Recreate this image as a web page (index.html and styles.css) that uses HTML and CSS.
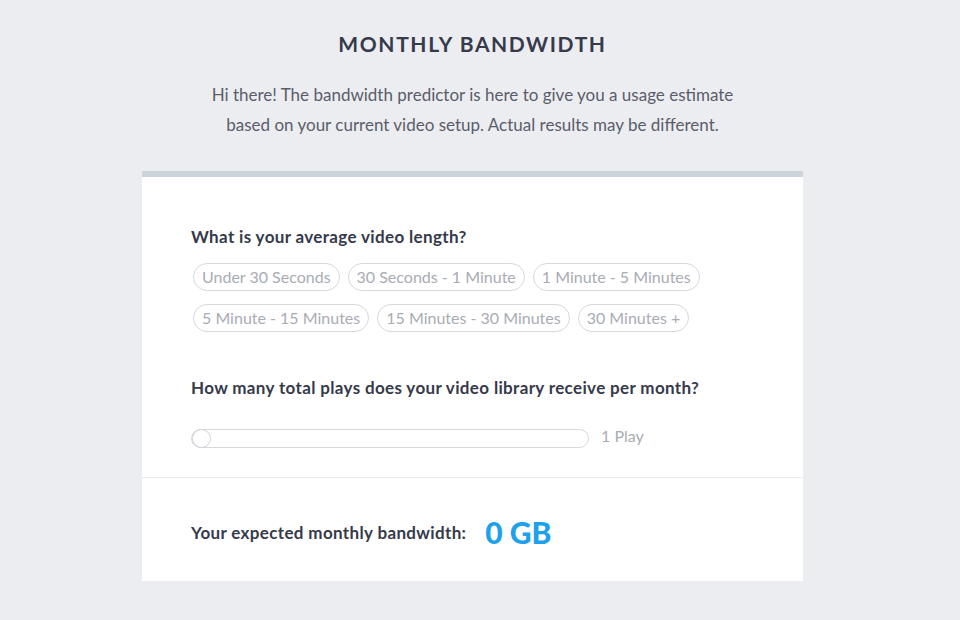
FILE: index.html
```html
<!DOCTYPE html>
<html>
<head>
<meta charset="utf-8">
<link rel="stylesheet" href="styles.css">
</head>
<body>
<div class="page">
  <h1 class="title">MONTHLY BANDWIDTH</h1>
  <p class="intro">Hi there! The bandwidth predictor is here to give you a usage estimate<br>based on your current video setup. Actual results may be different.</p>
  <div class="card">
    <div class="card-body">
      <h2 class="question">What is your average video length?</h2>
      <div class="pills">
        <span class="pill">Under 30 Seconds</span>
        <span class="pill">30 Seconds - 1 Minute</span>
        <span class="pill">1 Minute - 5 Minutes</span>
        <span class="pill">5 Minute - 15 Minutes</span>
        <span class="pill">15 Minutes - 30 Minutes</span>
        <span class="pill">30 Minutes +</span>
      </div>
      <h2 class="question q2">How many total plays does your video library receive per month?</h2>
      <div class="slider-row">
        <div class="track"><span class="thumb"></span></div>
        <span class="plays">1 Play</span>
      </div>
    </div>
    <div class="card-foot">
      <span class="result-label">Your expected monthly bandwidth:</span>
      <span class="result-value">0 GB</span>
    </div>
  </div>
</div>
</body>
</html>
```
FILE: styles.css
```css
html, body {
  margin: 0;
  padding: 0;
  background: #ecedf1;
}
body {
  font-family: Lato, "Open Sans", sans-serif;
  color: #3a3d4b;
}
.page {
  width: 945px;
  display: flex;
  flex-direction: column;
  align-items: center;
  padding-top: 30px;
}
.title {
  margin: 0;
  font-size: 21px;
  font-weight: 700;
  letter-spacing: 1.6px;
  color: #363a4a;
  line-height: 28px;
}
.intro {
  margin: 22px 0 0;
  text-align: center;
  font-size: 17px;
  line-height: 30px;
  font-weight: 400;
  color: #5a5d69;
}
.card {
  margin-top: 31px;
  width: 661px;
  background: #fff;
  border-top: 6px solid #cdd3db;
  margin-bottom: 40px;
}
.card-body {
  padding: 49px 49px 29px;
  border-bottom: 1px solid #ebecef;
}
.question {
  margin: 0;
  font-size: 17px;
  font-weight: 700;
  line-height: 22px;
  letter-spacing: 0.35px;
  color: #363a4a;
}
.q2 {
  margin-top: 45px;
}
.pills {
  display: flex;
  flex-wrap: wrap;
  gap: 13px 8px;
  margin-top: 15px;
  padding-left: 2px;
  width: 540px;
}
.pill {
  display: inline-block;
  height: 26px;
  line-height: 26px;
  padding: 0 8px;
  border: 1px solid #d6d8dd;
  border-radius: 14px;
  font-size: 16px;
  color: #a9acb4;
}
.slider-row {
  display: flex;
  align-items: center;
  margin-top: 30px;
}
.track {
  position: relative;
  width: 396px;
  height: 17px;
  border: 1px solid #d6d8dd;
  border-radius: 10px;
}
.thumb {
  position: absolute;
  left: 0;
  top: -1px;
  width: 17px;
  height: 17px;
  border: 1px solid #cfd1d6;
  border-radius: 50%;
  background: #fff;
}
.plays {
  margin-left: 12px;
  margin-top: -6px;
  font-size: 16px;
  color: #a9acb4;
}
.card-foot {
  display: flex;
  align-items: center;
  padding: 36px 49px 31px;
}
.result-label {
  font-size: 17px;
  font-weight: 700;
  letter-spacing: 0.35px;
  color: #363a4a;
}
.result-value {
  margin-left: 19px;
  font-size: 30px;
  line-height: 36px;
  font-weight: 900;
  color: #1da1ea;
}
```
